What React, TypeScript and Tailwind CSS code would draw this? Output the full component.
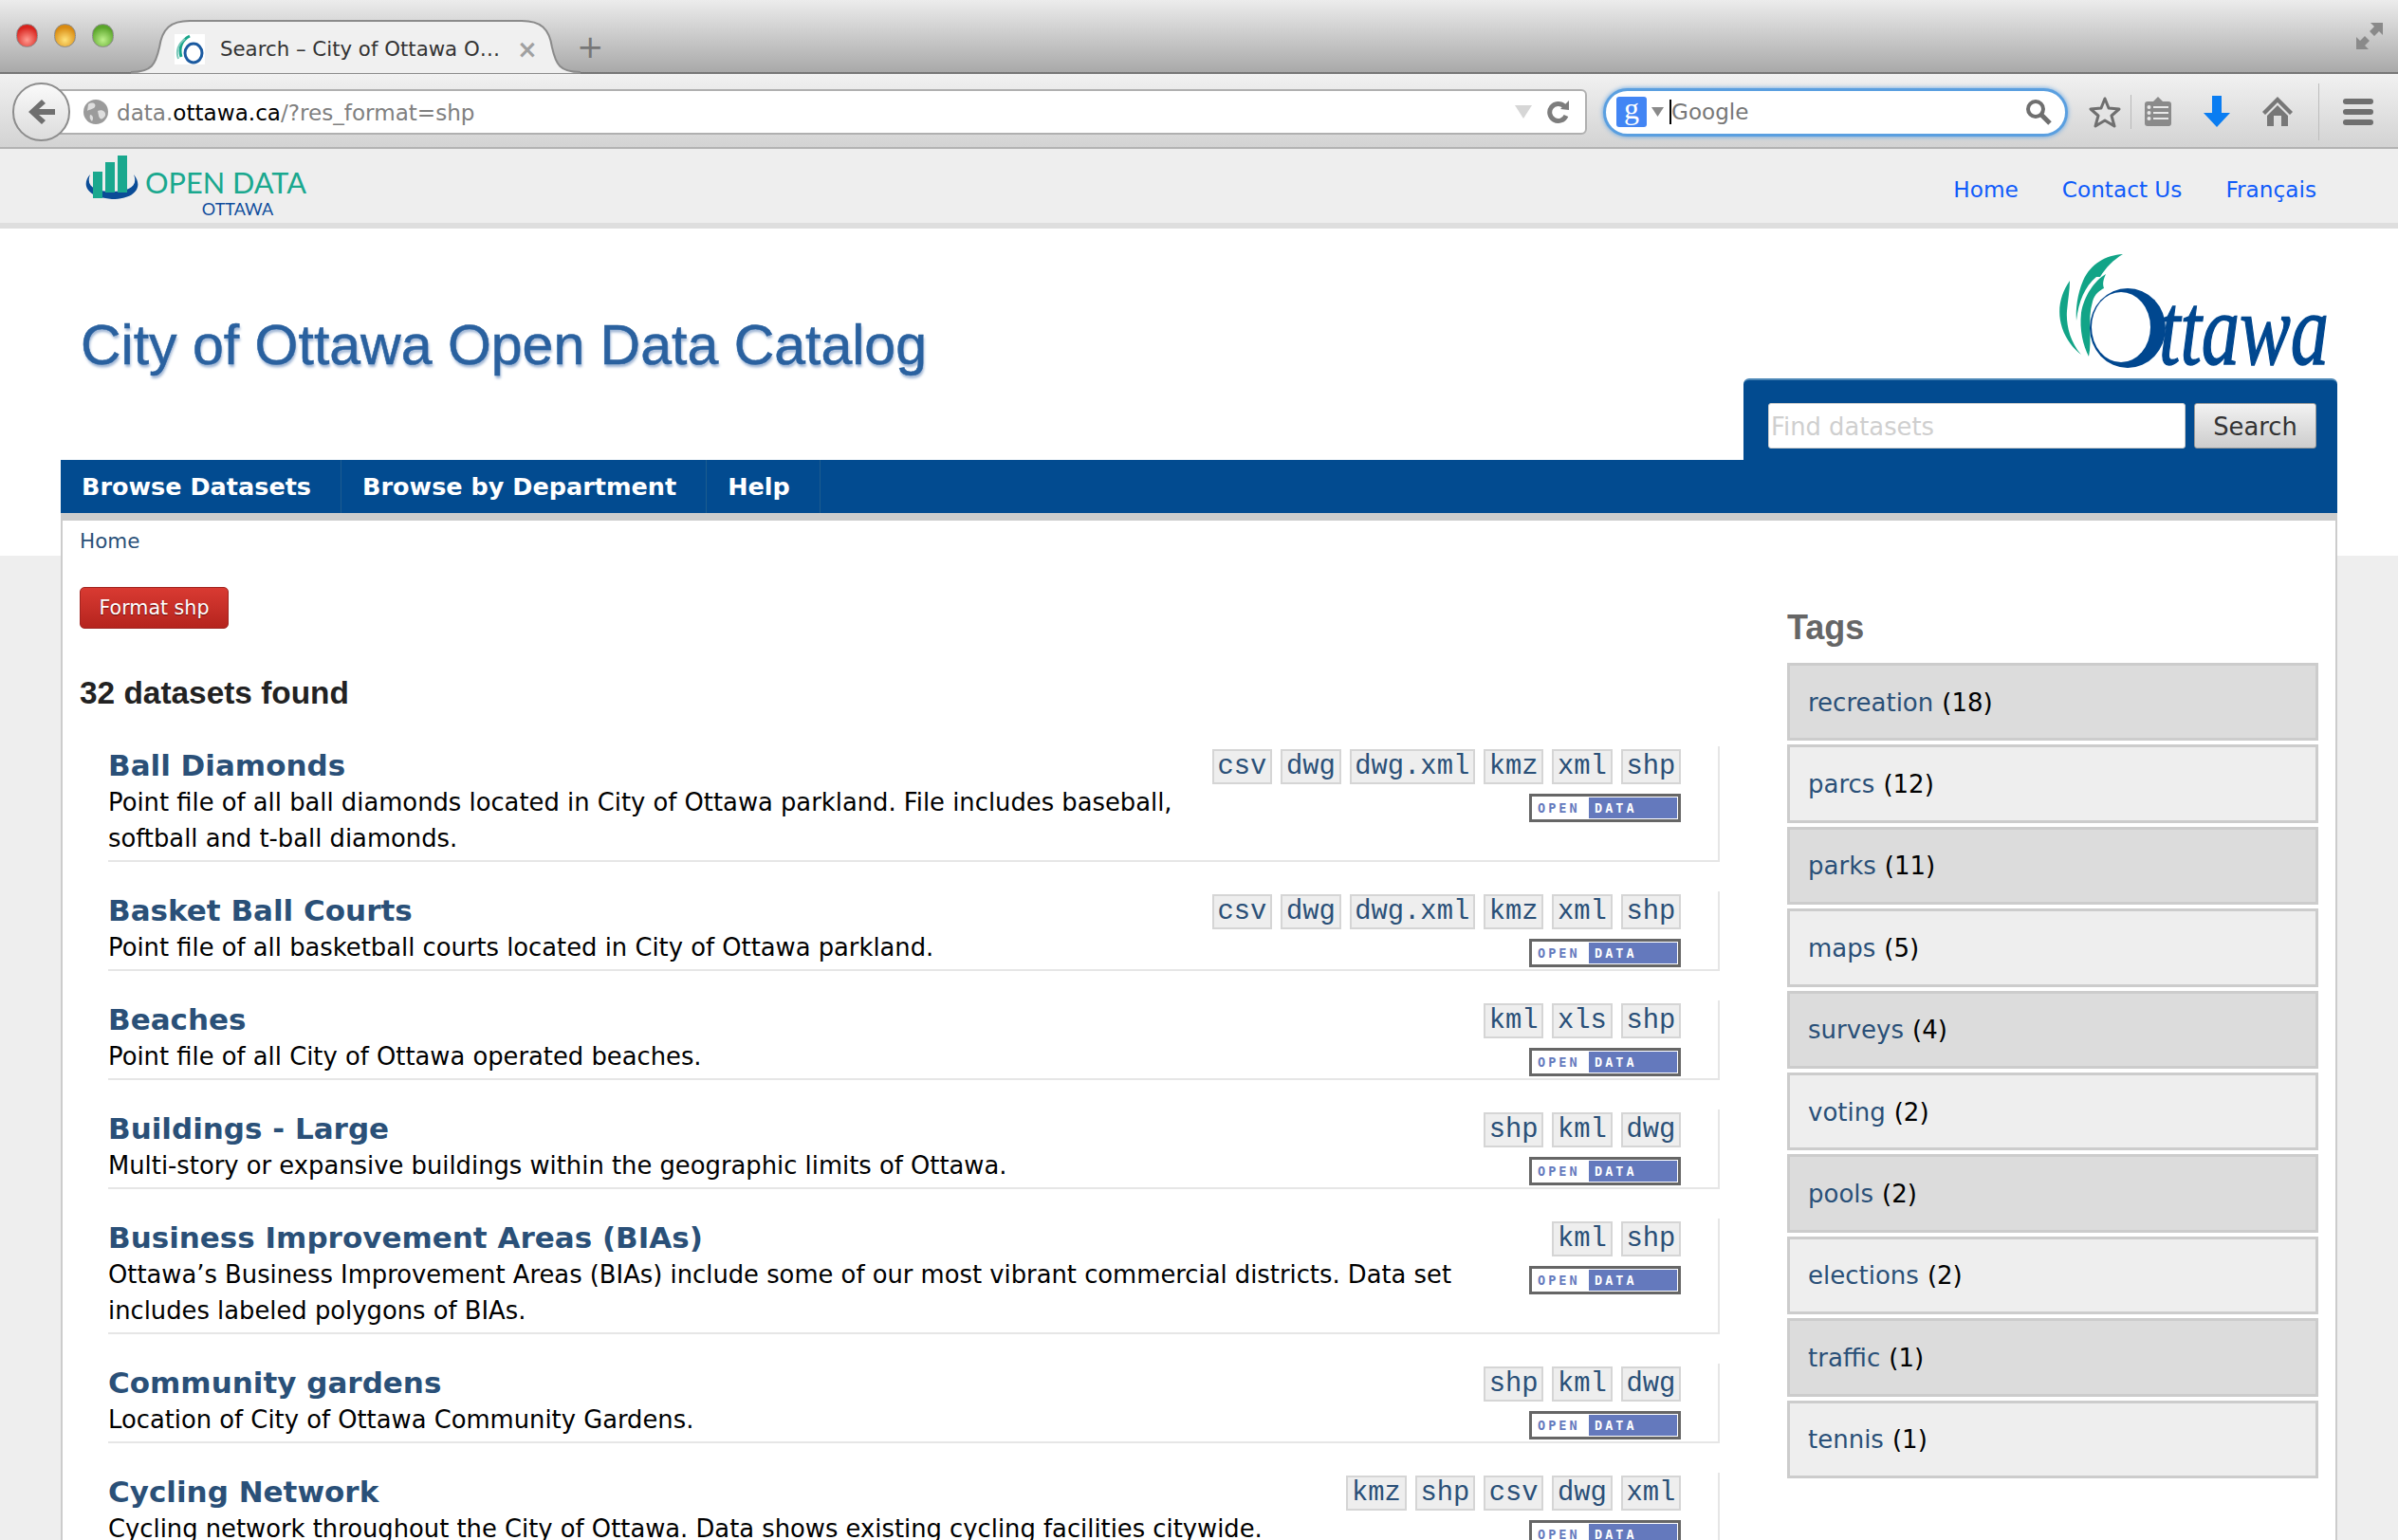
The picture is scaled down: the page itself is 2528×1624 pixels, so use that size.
import React from "react";

const rows = [
  { t: "Ball Diamonds", d: "Point file of all ball diamonds located in City of Ottawa parkland. File includes baseball, softball and t-ball diamonds.", f: ["csv", "dwg", "dwg.xml", "kmz", "xml", "shp"] },
  { t: "Basket Ball Courts", d: "Point file of all basketball courts located in City of Ottawa parkland.", f: ["csv", "dwg", "dwg.xml", "kmz", "xml", "shp"] },
  { t: "Beaches", d: "Point file of all City of Ottawa operated beaches.", f: ["kml", "xls", "shp"] },
  { t: "Buildings - Large", d: "Multi-story or expansive buildings within the geographic limits of Ottawa.", f: ["shp", "kml", "dwg"] },
  { t: "Business Improvement Areas (BIAs)", d: "Ottawa’s Business Improvement Areas (BIAs) include some of our most vibrant commercial districts. Data set includes labeled polygons of BIAs.", f: ["kml", "shp"] },
  { t: "Community gardens", d: "Location of City of Ottawa Community Gardens.", f: ["shp", "kml", "dwg"] },
  { t: "Cycling Network", d: "Cycling network throughout the City of Ottawa. Data shows existing cycling facilities citywide.", f: ["kmz", "shp", "csv", "dwg", "xml"] },
];

const tags = [
  ["recreation", 18], ["parcs", 12], ["parks", 11], ["maps", 5], ["surveys", 4],
  ["voting", 2], ["pools", 2], ["elections", 2], ["traffic", 1], ["tennis", 1],
] as const;

function Light({ c }: { c: string }) {
  return <span className={`h-[25px] w-[23px] rounded-full border border-[#8a8a8a] ${c}`} />;
}

function TabBar() {
  return (
    <div className="flex h-[78px] items-start border-b-2 border-[#777] bg-[linear-gradient(#ececec,#a9a9a9)]">
      <div className="ml-[17px] mt-[25px] flex gap-[17px]">
        <Light c="bg-[radial-gradient(circle_at_50%_70%,#ff9a90,#d8231d_70%)]" />
        <Light c="bg-[radial-gradient(circle_at_50%_70%,#ffe27a,#d98a10_70%)]" />
        <Light c="bg-[radial-gradient(circle_at_50%_70%,#bdf08a,#5aa52a_70%)]" />
      </div>
      <div className="relative ml-[18px] mt-[20px] flex h-[58px] w-[474px] items-center pl-[46px] pt-[6px]">
        <svg className="absolute left-0 top-0" width="474" height="58" viewBox="0 0 474 58">
          <path d="M0 56 C22 56 26 48 30 30 C33 10 42 2 62 2 H412 C432 2 441 10 444 30 C448 48 452 56 474 56 V58 H0Z" fill="#f0f0f0" stroke="#8b8b8b" strokeWidth="2" />
        </svg>
        <svg className="relative bg-white" width="32" height="32" viewBox="0 0 32 32">
          <path d="M16 2 C8 6 4 14 7 24" fill="none" stroke="#18a58a" strokeWidth="3" />
          <path d="M11 5 C4 10 1 18 4 26" fill="none" stroke="#7cc9ba" strokeWidth="2" />
          <ellipse cx="20" cy="20" rx="9" ry="10" fill="none" stroke="#1b5aa0" strokeWidth="3" />
        </svg>
        <span className="relative ml-[16px] w-[313px] whitespace-nowrap font-['DejaVu_Sans',sans-serif] text-[21.3px] text-[#333]">Search – City of Ottawa O…</span>
        <span className="relative font-['DejaVu_Sans',sans-serif] text-[26px] font-bold leading-none text-[#a0a0a0]">×</span>
      </div>
      <span className="ml-[-4px] mt-[24px] font-['DejaVu_Sans',sans-serif] text-[34px] leading-[50px] text-[#777]">+</span>
      <svg className="ml-auto mr-[16px] mt-[24px]" width="28" height="28" viewBox="0 0 28 28" fill="#8a8a8a">
        <path d="M15 0 H28 V13 L24 9 L19 14 L14 9 L19 4Z" />
        <path d="M0 15 L4 19 L9 14 L14 19 L9 24 L13 28 H0Z" />
      </svg>
    </div>
  );
}

function ToolBar() {
  return (
    <div className="relative flex h-[79px] items-center border-b-2 border-[#b3b3b3] bg-[linear-gradient(#f1f1f1,#d3d3d3)] pt-[3px]">
      <div className="z-10 ml-[13px] flex h-[62px] w-[61px] items-center justify-center rounded-full border-2 border-[#8d8d8d] bg-[linear-gradient(#fafafa,#dcdcdc)]">
        <svg width="30" height="30" viewBox="0 0 30 30" fill="#6f6f6f">
          <path d="M15 2 L19 6 L12 12 H29 V18 H12 L19 24 L15 28 L1 15Z" />
        </svg>
      </div>
      <div className="-ml-[14px] flex h-[48px] w-[1613px] items-center rounded-r-md border-2 border-[#b0b0b0] bg-white pl-[25px] pr-[14px]">
        <svg width="28" height="28" viewBox="0 0 28 28">
          <circle cx="14" cy="14" r="13" fill="#9b9b9b" />
          <path d="M6 6 C10 3 15 5 13 9 C10 12 7 11 5 13Z M16 13 C21 11 25 14 24 18 C21 23 18 22 17 18Z M8 17 C11 17 12 21 10 24 C8 22 7 20 8 17Z" fill="#dedede" />
        </svg>
        <span className="ml-[8px] pt-[2px] font-['DejaVu_Sans',sans-serif] text-[23.1px] text-[#808080]">
          data.<span className="text-black">ottawa.ca</span>/?res_format=shp
        </span>
        <svg className="ml-auto" width="18" height="14" viewBox="0 0 18 14"><path d="M0 0 H18 L9 14Z" fill="#d6d6d6" /></svg>
        <svg className="ml-[16px]" width="26" height="26" viewBox="0 0 26 26">
          <path d="M20 17 A9 9 0 1 1 18 7" fill="none" stroke="#7d7d7d" strokeWidth="5" />
          <path d="M14 10 L23 1 L23 11Z" fill="#7d7d7d" />
        </svg>
      </div>
      <div className="ml-[17px] flex h-[51px] w-[490px] items-center rounded-full border-[3px] border-[#5a9fe0] bg-white pl-[11px] pr-[14px] shadow-[0_0_5px_#5a9fe0]">
        <span className="flex h-[32px] w-[32px] items-start justify-center rounded-[3px] bg-[#4285f4] font-['Liberation_Serif',serif] text-[32px] leading-[24px] text-white">g</span>
        <svg className="ml-[5px]" width="13" height="10" viewBox="0 0 13 10"><path d="M0 0 H13 L6.5 10Z" fill="#8a8a8a" /></svg>
        <span className="ml-[6px] h-[26px] w-[2px] bg-black" />
        <span className="pt-[2px] font-['DejaVu_Sans',sans-serif] text-[23.1px] leading-none text-[#777]">Google</span>
        <svg className="ml-auto" width="28" height="28" viewBox="0 0 28 28" fill="none" stroke="#6f6f6f">
          <circle cx="11" cy="11" r="8" strokeWidth="4" />
          <path d="M17 17 L26 26" strokeWidth="5" />
        </svg>
      </div>
      <svg className="ml-[22px]" width="34" height="34" viewBox="0 0 34 34">
        <path d="M17 3 L21 13 L32 14 L24 21 L27 32 L17 26 L7 32 L10 21 L2 14 L13 13Z" fill="#e5e5e5" stroke="#6f6f6f" strokeWidth="3" strokeLinejoin="round" />
      </svg>
      <span className="ml-[10px] h-[36px] w-px bg-[#b8b8b8]" />
      <svg className="ml-[13px]" width="30" height="32" viewBox="0 0 30 32">
        <rect x="1" y="5" width="28" height="26" rx="3" fill="#8a8a8a" />
        <path d="M15 0 L21 6 H9Z" fill="#8a8a8a" />
        <path d="M10 11 H26 M10 17 H26 M10 23 H26" stroke="#e8e8e8" strokeWidth="2" />
        <circle cx="5.5" cy="11" r="2" fill="#e8e8e8" /><circle cx="5.5" cy="17" r="2" fill="#e8e8e8" /><circle cx="5.5" cy="23" r="2" fill="#e8e8e8" />
      </svg>
      <svg className="ml-[32px]" width="30" height="34" viewBox="0 0 30 34">
        <path d="M10 0 H20 V18 H29 L15 33 L1 18 H10Z" fill="#0a7df2" />
      </svg>
      <svg className="ml-[32px]" width="34" height="34" viewBox="0 0 34 34" fill="#777">
        <path d="M17 1 L33 17 L30 20 L17 7 L4 20 L1 17Z" />
        <path d="M17 10 L28 21 V32 H21 V21 H13 V32 H6 V21Z" />
      </svg>
      <span className="ml-[26px] h-[60px] w-px bg-[#bdbdbd]" />
      <div className="ml-[25px] flex w-[32px] flex-col gap-[5px]">
        <span className="h-[6px] rounded-[3px] bg-[#6f6f6f]" />
        <span className="h-[6px] rounded-[3px] bg-[#6f6f6f]" />
        <span className="h-[6px] rounded-[3px] bg-[#6f6f6f]" />
      </div>
    </div>
  );
}

function TopHeader() {
  return (
    <div className="flex h-[84px] items-start border-b-[6px] border-[#dedede] bg-[#eeeeee] pl-[88px] pr-[86px]">
      <svg className="mt-[7px]" width="60" height="47" viewBox="0 0 60 47">
        <path d="M7 20 C-2 30 2 44 30 46 C56 46 63 32 53 20 C58 32 48 38 30 38 C12 38 2 32 7 20Z" fill="#0a4c97" />
        <rect x="10" y="17" width="10" height="28" fill="#1aa88e" />
        <rect x="23" y="7" width="10" height="32" fill="#1aa88e" />
        <rect x="36" y="0" width="10" height="39" fill="#1aa88e" />
      </svg>
      <div className="ml-[5px] mt-[19px] flex flex-col items-end">
        <span className="whitespace-nowrap font-['Lato',sans-serif] text-[30.7px] leading-[34px] text-[#1aa88e]">OPEN DATA</span>
        <span className="mr-[35px] font-['Lato',sans-serif] text-[18px] leading-[20px] text-[#0f4d9c]">OTTAWA</span>
      </div>
      <div className="ml-auto mt-[28px] flex gap-[46px] font-['DejaVu_Sans',sans-serif] text-[23.2px] leading-[30px] text-[#0f5bfa]">
        <span>Home</span><span>Contact Us</span><span>Français</span>
      </div>
    </div>
  );
}

function OttawaLogo() {
  return (
    <svg className="mr-[9px] mt-[27px]" width="285" height="120" viewBox="0 0 285 120">
      <path d="M68 0 C50 1 34 10 26 28 C20 42 18 58 19 70 C21 50 28 34 40 24 L44 24 C50 14 58 6 68 0Z" fill="#12a487" />
      <path d="M50 21 C38 28 27 44 24 62 C22 80 26 96 32 108 C36 90 30 70 36 50 C38 42 44 38 48 36 C46 30 48 26 50 21Z" fill="#12a487" />
      <path d="M12 28 C2 42 -2 60 4 78 C8 90 16 100 24 106 C12 92 8 74 9 60 C10 48 12 38 12 28Z" fill="#12a487" />
      <ellipse cx="73" cy="78" rx="40" ry="42" fill="#00478f" />
      <ellipse cx="66" cy="77" rx="31" ry="37" fill="#fff" />
      <text x="106" y="116" fontFamily="'Liberation Serif',serif" fontStyle="italic" fontSize="108" textLength="179" lengthAdjust="spacingAndGlyphs" fill="#00478f" stroke="#00478f" strokeWidth="1.5">ttawa</text>
    </svg>
  );
}

function Banner() {
  return (
    <div className="mx-auto flex w-[2400px] justify-between">
      <h1 className="ml-[21px] mt-[88px] whitespace-nowrap font-['Liberation_Sans',sans-serif] text-[59px] leading-[70px] text-[#2a619f] [text-shadow:1px_3px_3px_#9db4d4] [-webkit-text-stroke:0.5px_#2a619f]">City of Ottawa Open Data Catalog</h1>
      <div className="flex flex-col items-end">
        <OttawaLogo />
        <div className="mt-[11px] flex h-[86px] w-[626px] items-start gap-[9px] rounded-t-[6px] border-t-2 border-[#4b86b6] bg-[#024b90] pl-[26px] pr-[22px] pt-[24px]">
          <div className="flex h-[48px] w-[440px] items-center rounded-[3px] border border-[#ccc] bg-white pl-[2px] pt-[3px] font-['DejaVu_Sans',sans-serif] text-[25.8px] text-[#cfcfcf]">Find datasets</div>
          <div className="flex h-[48px] w-[129px] items-center justify-center rounded-[3px] border border-[#999] bg-[linear-gradient(#f2f2f2,#cdcdcd)] pt-[3px] font-['DejaVu_Sans',sans-serif] text-[25.8px] text-[#333]">Search</div>
        </div>
      </div>
    </div>
  );
}

function Nav() {
  return (
    <div className="flex h-[56px] bg-[#024b90] font-['DejaVu_Sans',sans-serif] text-[25.5px] font-bold leading-[56px] text-white">
      <span className="border-r border-[#1d5c8f] pl-[22px] pr-[31px]">Browse Datasets</span>
      <span className="border-r border-[#1d5c8f] pl-[22px] pr-[31px]">Browse by Department</span>
      <span className="border-r border-[#1d5c8f] pl-[22px] pr-[31px]">Help</span>
    </div>
  );
}

function Row({ t, d, f }: { t: string; d: string; f: readonly string[] }) {
  return (
    <div className="mb-[31px] flex border-b-2 border-r-2 border-[#e6e6e6] pr-[39px] font-['DejaVu_Sans',sans-serif]">
      <div className="min-w-0 flex-1 pb-[4px] pr-[30px]">
        <h3 className="text-[31px] font-bold leading-[40px] text-[#2a5078]">{t}</h3>
        <p className="text-[25.8px] leading-[38px] text-black">{d}</p>
      </div>
      <div className="flex shrink-0 flex-col items-end pt-[3px]">
        <div className="flex gap-[9px]">
          {f.map((x) => (
            <span key={x} className="h-[37px] border-2 border-[#d5d5d5] bg-[#eeeeee] px-[3.75px] font-['Liberation_Mono',monospace] text-[28.8px] leading-[33px] text-[#2a5078]">{x}</span>
          ))}
        </div>
        <div className="mt-[10px] flex h-[30px] w-[160px] items-stretch border-[3px] border-[#666] bg-white p-[1px] font-['DejaVu_Sans_Mono',monospace] text-[13.5px] font-bold leading-[22px] tracking-[3px]">
          <span className="w-[59px] pl-[5px] text-[#6479bd]">OPEN</span>
          <span className="flex-1 bg-[#6479bd] pl-[6px] text-white">DATA</span>
        </div>
      </div>
    </div>
  );
}

function Main() {
  return (
    <div className="mx-auto flex w-[2400px] border-x-2 border-[#cccccc] bg-white">
      <div className="ml-[18px] w-[1729px]">
        <div className="pt-[8px] font-['DejaVu_Sans',sans-serif] text-[21.5px] leading-[28px] text-[#2a5078]">Home</div>
        <div className="mt-[34px] flex h-[44px] w-[157px] items-center justify-center rounded-[5px] border border-[#a02420] bg-[linear-gradient(#d93a32,#b5241e)] pt-[1px] font-['DejaVu_Sans',sans-serif] text-[20.6px] text-white [text-shadow:0_1px_1px_#6a100c]">Format shp</div>
        <h2 className="mt-[48px] font-['Liberation_Sans',sans-serif] text-[33.4px] font-bold leading-[40px] text-[#222]">32 datasets found</h2>
        <div className="ml-[30px] mt-[36px]">
          {rows.map((r) => <Row key={r.t} {...r} />)}
        </div>
      </div>
      <div className="ml-[71px] w-[560px]">
        <h2 className="mt-[92px] font-['Liberation_Sans',sans-serif] text-[36px] font-bold leading-[42px] text-[#666]">Tags</h2>
        <div className="mt-[16px] flex flex-col gap-[4px]">
          {tags.map(([n, c], i) => (
            <div key={n} className={`flex h-[82.4px] items-center border-[3px] border-[#cccccc] pl-[19px] pt-[2px] font-['DejaVu_Sans',sans-serif] text-[26px] ${i % 2 === 0 ? "bg-[#dcdcdc]" : "bg-[#eeeeee]"}`}>
              <span className="text-[#2a5078]">{n}</span>
              <span className="ml-[9px] text-black">({c})</span>
            </div>
          ))}
        </div>
      </div>
    </div>
  );
}

export default function App() {
  return (
    <div className="h-[1624px] w-[2528px] overflow-hidden bg-white">
      <TabBar />
      <ToolBar />
      <TopHeader />
      <div className="h-[1383px] bg-[linear-gradient(#fff_345px,#eeeeee_345px)]">
        <Banner />
        <div className="mx-auto w-[2400px]">
          <Nav />
        </div>
        <div className="mx-auto h-[8px] w-[2400px] bg-[#cccccc]" />
        <Main />
      </div>
    </div>
  );
}
